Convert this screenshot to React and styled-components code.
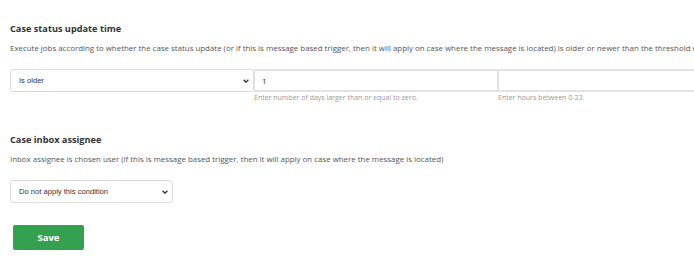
import styled, { createGlobalStyle } from "styled-components";

const GlobalStyle = createGlobalStyle`
  html, body {
    margin: 0;
    padding: 0;
    background: #ffffff;
    overflow: hidden;
  }
  body {
    font-family: "Open Sans", "Liberation Sans", sans-serif;
    color: #333;
  }
`;

const Page = styled.main`
  width: 694px;
  height: 258px;
  padding: 22px 0 0 10px;
  box-sizing: border-box;
  overflow: hidden;
`;

const Section = styled.section`
  margin-bottom: ${(p) => p.$gap || 0}px;
`;

const Heading = styled.h3`
  margin: 0 0 7px 0;
  font-size: 9.2px;
  font-weight: 700;
  line-height: 13px;
  color: #333;
`;

const Description = styled.p`
  margin: 0 0 15px 0;
  font-size: 7.9px;
  line-height: 12px;
  color: #555;
  white-space: nowrap;
  overflow: hidden;
`;

const FieldRow = styled.div`
  display: flex;
  width: 740px;
`;

const Field = styled.div`
  display: flex;
  flex-direction: column;
  width: ${(p) => p.$width}px;
  flex-shrink: 0;
`;

const SelectBox = styled.div`
  height: 23px;
  width: ${(p) => (p.$width ? `${p.$width}px` : "auto")};
  box-sizing: border-box;
  border: 1px solid #dcdcdc;
  border-radius: 3px;
  background: #fff;
  display: flex;
  align-items: center;
  justify-content: space-between;
  padding: 0 4px 0 8px;
  font-family: "Liberation Sans", Arial, sans-serif;
  font-size: 7.6px;
  color: #333;
`;

const Chevron = styled.svg`
  width: 6px;
  height: 4px;
  margin-top: 1px;
`;

const TextInput = styled.div`
  height: 23px;
  box-sizing: border-box;
  border: 2px solid #e2e2e2;
  border-left-width: 1px;
  border-right-width: 1px;
  background: #fff;
  display: flex;
  align-items: center;
  padding: 0 7px;
  font-size: 8px;
  color: #333;
`;

const Help = styled.span`
  margin-top: 1px;
  font-size: 7px;
  line-height: 10px;
  color: #999;
`;

const SaveButton = styled.button`
  margin-left: 3px;
  width: 71px;
  height: 25px;
  border: none;
  border-radius: 2px;
  background: #33a150;
  color: #fff;
  font-family: "Open Sans", "Liberation Sans", sans-serif;
  font-weight: 700;
  font-size: 9.5px;
  cursor: pointer;
`;

function Select({ value, width }) {
  return (
    <SelectBox $width={width}>
      <span>{value}</span>
      <Chevron viewBox="0 0 10 6">
        <path d="M1 1l4 4 4-4" fill="none" stroke="#333" strokeWidth="2.2" />
      </Chevron>
    </SelectBox>
  );
}

export default function App() {
  return (
    <>
      <GlobalStyle />
      <Page>
        <Section $gap={30}>
          <Heading>Case status update time</Heading>
          <Description>
            Execute jobs according to whether the case status update (or if this is message based trigger, then it will apply on case where the message is located) is older or newer than the threshold defined below.
          </Description>
          <FieldRow>
            <Field $width={244}>
              <Select value="Is older" />
            </Field>
            <Field $width={244}>
              <TextInput>1</TextInput>
              <Help>Enter number of days larger than or equal to zero.</Help>
            </Field>
            <Field $width={244}>
              <TextInput />
              <Help>Enter hours between 0-23.</Help>
            </Field>
          </FieldRow>
        </Section>
        <Section $gap={21}>
          <Heading>Case inbox assignee</Heading>
          <Description>
            Inbox assignee is chosen user (if this is message based trigger, then it will apply on case where the message is located)
          </Description>
          <Select value="Do not apply this condition" width={163} />
        </Section>
        <SaveButton>Save</SaveButton>
      </Page>
    </>
  );
}
